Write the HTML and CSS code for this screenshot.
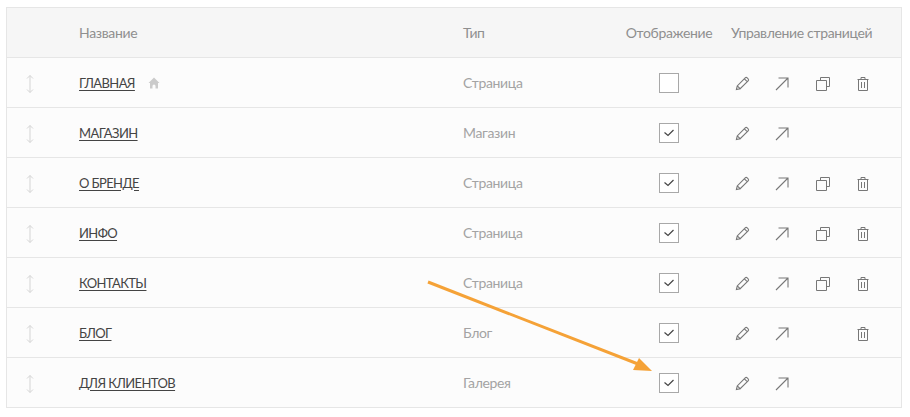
FILE: index.html
```html
<!DOCTYPE html>
<html lang="en">
<head>
  <meta charset="UTF-8" />
  <title>Страницы</title>
  <link rel="stylesheet" href="styles.css">
</head>
<body>
  <svg width="0" height="0" class="sprites" aria-hidden="true">
    <symbol id="i-drag" viewBox="0 0 8 18"><path d="M4 .5v17M1 3.500 4 .5l3 3M1 14.500l3 3 3-3" fill="none" stroke="currentColor"/></symbol>
    <symbol id="i-home" viewBox="0 0 12 12"><path d="M6 .5 .5 6H2v5.500h2.500V9a1.500 1.500 0 0 1 3 0v2.500H10V6h1.500z" fill="currentColor"/></symbol>
    <symbol id="i-check" viewBox="0 0 18 18"><path d="M4.500 8.500 8 11.500l5.500-5.500" fill="none" stroke="currentColor" stroke-width="1.200"/></symbol>
    <symbol id="i-edit" viewBox="0 0 16 16"><path d="M1.500 14.500l.9-3.900L10.900 2a1.500 1.500 0 0 1 2.100 0l1 1a1.500 1.500 0 0 1 0 2.100l-8.500 8.500zM2.400 10.600l3.600 3.400M10 3l3 3" fill="none" stroke="currentColor" stroke-width="1.200"/></symbol>
    <symbol id="i-open" viewBox="0 0 14 14"><path d="M1 13 13 1M3.500 1H13v9.500" fill="none" stroke="currentColor" stroke-width="1.100"/></symbol>
    <symbol id="i-copy" viewBox="0 0 14 14"><path d="M4.500 3.500v-3h9v9h-3M.5 3.500h10v10H.5z" fill="none" stroke="currentColor"/></symbol>
    <symbol id="i-trash" viewBox="0 0 12 14"><path d="M.5 2.500h11M4 2.500v-2h4v2M1.500 2.500v11h9v-11M4.500 5v6M7.500 5v6" fill="none" stroke="currentColor"/></symbol>
  </svg>

  <div class="pages">
    <div class="row head">
      <div></div>
      <div>Название</div>
      <div>Тип</div>
      <div class="col-show">Отображение</div>
      <div class="col-manage">Управление страницей</div>
    </div>

    <div class="row">
      <svg class="drag"><use href="#i-drag"/></svg>
      <div class="name"><a href="#">ГЛАВНАЯ</a><svg class="home"><use href="#i-home"/></svg></div>
      <div class="type">Страница</div>
      <div class="col-show"><span class="box"></span></div>
      <div class="tools">
        <svg class="edit"><use href="#i-edit"/></svg>
        <svg class="open"><use href="#i-open"/></svg>
        <svg class="copy"><use href="#i-copy"/></svg>
        <svg class="trash"><use href="#i-trash"/></svg>
      </div>
    </div>

    <div class="row">
      <svg class="drag"><use href="#i-drag"/></svg>
      <div class="name"><a href="#">МАГАЗИН</a></div>
      <div class="type">Магазин</div>
      <div class="col-show"><span class="box"><svg><use href="#i-check"/></svg></span></div>
      <div class="tools">
        <svg class="edit"><use href="#i-edit"/></svg>
        <svg class="open"><use href="#i-open"/></svg>
      </div>
    </div>

    <div class="row">
      <svg class="drag"><use href="#i-drag"/></svg>
      <div class="name"><a href="#">О БРЕНДЕ</a></div>
      <div class="type">Страница</div>
      <div class="col-show"><span class="box"><svg><use href="#i-check"/></svg></span></div>
      <div class="tools">
        <svg class="edit"><use href="#i-edit"/></svg>
        <svg class="open"><use href="#i-open"/></svg>
        <svg class="copy"><use href="#i-copy"/></svg>
        <svg class="trash"><use href="#i-trash"/></svg>
      </div>
    </div>

    <div class="row">
      <svg class="drag"><use href="#i-drag"/></svg>
      <div class="name"><a href="#">ИНФО</a></div>
      <div class="type">Страница</div>
      <div class="col-show"><span class="box"><svg><use href="#i-check"/></svg></span></div>
      <div class="tools">
        <svg class="edit"><use href="#i-edit"/></svg>
        <svg class="open"><use href="#i-open"/></svg>
        <svg class="copy"><use href="#i-copy"/></svg>
        <svg class="trash"><use href="#i-trash"/></svg>
      </div>
    </div>

    <div class="row">
      <svg class="drag"><use href="#i-drag"/></svg>
      <div class="name"><a href="#">КОНТАКТЫ</a></div>
      <div class="type">Страница</div>
      <div class="col-show"><span class="box"><svg><use href="#i-check"/></svg></span></div>
      <div class="tools">
        <svg class="edit"><use href="#i-edit"/></svg>
        <svg class="open"><use href="#i-open"/></svg>
        <svg class="copy"><use href="#i-copy"/></svg>
        <svg class="trash"><use href="#i-trash"/></svg>
      </div>
    </div>

    <div class="row">
      <svg class="drag"><use href="#i-drag"/></svg>
      <div class="name"><a href="#">БЛОГ</a></div>
      <div class="type">Блог</div>
      <div class="col-show"><span class="box"><svg><use href="#i-check"/></svg></span></div>
      <div class="tools">
        <svg class="edit"><use href="#i-edit"/></svg>
        <svg class="open"><use href="#i-open"/></svg>
        <span class="gap"></span>
        <svg class="trash"><use href="#i-trash"/></svg>
      </div>
    </div>

    <div class="row">
      <svg class="drag"><use href="#i-drag"/></svg>
      <div class="name"><a href="#">ДЛЯ КЛИЕНТОВ</a></div>
      <div class="type">Галерея</div>
      <div class="col-show"><span class="box"><svg><use href="#i-check"/></svg></span></div>
      <div class="tools">
        <svg class="edit"><use href="#i-edit"/></svg>
        <svg class="open"><use href="#i-open"/></svg>
      </div>
    </div>
  </div>

  <!-- annotation arrow over the table -->
  <svg class="arrow" width="910" height="417" aria-hidden="true">
    <path d="M428 282 638 364" fill="none" stroke="#f5a237" stroke-width="3"/>
    <path d="M652 371 633 370 639 358z" fill="#f5a237"/>
  </svg>
</body>
</html>
```

FILE: styles.css
```css
* {
  box-sizing: border-box;
}
body {
  margin: 0;
  padding: 7px 8px 0 6px;
  background: #fff;
  font-family: 'Lato', sans-serif;
  font-size: 14px;
  letter-spacing: -0.35px;
  color: #444;
}
.sprites {
  position: absolute;
}
.pages {
  border: 1px solid #e6e6e6;
  border-bottom: 0;
  background: #fcfcfc;
}
.row {
  display: grid;
  grid-template-columns: 72px 384px 144px 124px 1fr;
  align-items: center;
  height: 50px;
  border-bottom: 1px solid #e6e6e6;
}
.head {
  background: #f6f6f6;
  color: #8f8f8f;
}
.col-show {
  display: flex;
  justify-content: center;
}
.col-manage {
  white-space: nowrap;
}
.drag {
  width: 8px;
  height: 18px;
  margin: 3px 0 0 19px;
  color: #d4d4d4;
}
.name {
  display: flex;
  align-items: center;
  font-size: 13px;
  letter-spacing: -0.6px;
}
.name a {
  color: #444;
  text-decoration: underline;
  text-underline-offset: 2px;
}
.home {
  width: 12px;
  height: 12px;
  margin-left: 13px;
  color: #cbcbcb;
}
.type {
  color: #a3a3a3;
}
.box {
  display: block;
  width: 20px;
  height: 20px;
  border: 1px solid #a8a8a8;
  background: #fff;
  color: #444;
}
.box svg {
  display: block;
  width: 18px;
  height: 18px;
}
.tools {
  display: flex;
  align-items: center;
  padding: 2px 0 0 4px;
  color: #777;
}
.tools svg,
.tools .gap {
  display: block;
  flex: none;
  width: 14px;
  height: 14px;
  margin-right: 26px;
}
.tools .edit {
  width: 15px;
  height: 15px;
  margin-right: 25px;
}
.tools .copy {
  margin-left: 1px;
  margin-right: 25px;
}
.tools .gap + .trash,
.tools .trash {
  width: 12px;
  margin-left: 2px;
}
.tools .gap {
  margin-right: 25px;
  margin-left: 1px;
}
.arrow {
  position: absolute;
  top: 0;
  left: 0;
}
```
